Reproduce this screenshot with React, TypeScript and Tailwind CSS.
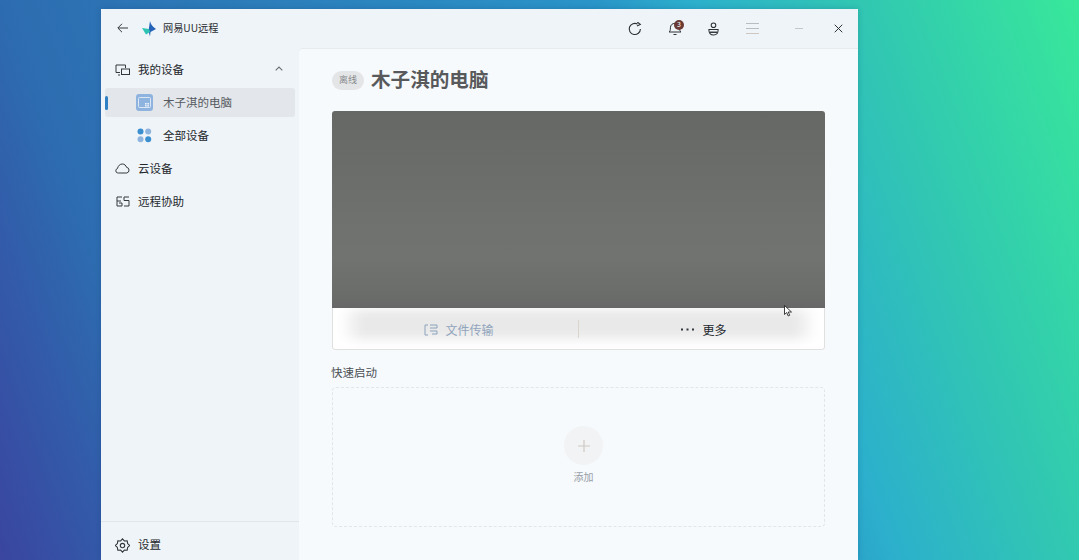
import React from "react";

const font = { fontFamily: '"Noto Sans CJK SC", "Liberation Sans", sans-serif' };

function NavRow({ icon, label, sub, active, extra }: { icon: React.ReactNode; label: string; sub?: boolean; active?: boolean; extra?: React.ReactNode }) {
  return (
    <div className={`relative flex items-center h-[29px] mx-[4px] rounded-[3px] ${active ? "bg-[#e3e6ea]" : ""} ${sub ? "pl-[31px]" : "pl-[10px]"}`}>
      {active && <span className="absolute left-0 top-[8px] h-[14px] w-[3px] rounded-full bg-[#2f7fc4]" />}
      <span className={`flex items-center justify-center shrink-0 ${sub ? "w-[17px] mr-[10px]" : "w-[15px] mr-[8px]"}`}>{icon}</span>
      <span className={`text-[11.5px] ${active ? "text-[#555a60]" : "text-[#23272c]"}`}>{label}</span>
      {extra}
    </div>
  );
}

export default function App() {
  return (
    <div style={font} className="relative h-[560px] w-[1079px] overflow-hidden bg-[linear-gradient(70deg,#3a45a0_0%,#2d6cb0_16%,#2a94c8_62%,#2cb0cc_70%,#31c7b2_83%,#38e89a_100%)]">
      {/* window */}
      <div className="absolute left-[101px] top-[9px] flex h-[551px] w-[757px] flex-col bg-[#eff4f8] shadow-[0_0_6px_rgba(0,40,90,0.2)]">
        {/* title bar */}
        <div className="flex h-[39px] shrink-0 items-center">
          <svg className="ml-[16px] mb-[2px]" width="11" height="10" viewBox="0 0 11 10" fill="none" stroke="#33383e" strokeWidth="1">
            <path d="M11 5H1M5 .8 .8 5 5 9.200" />
          </svg>
          <svg className="ml-[13px]" width="16" height="16" viewBox="0 0 16 16">
            <path d="M9 0 C9.500 3 11 5 15 8 L9.500 11 L9 15.500 L7.500 10 Z" fill="#2563b8" />
            <path d="M1 7 L8 8 L9 11 L5 13.500 Z" fill="#2fc3b3" />
          </svg>
          <span className="ml-[6px] mb-[2px] text-[10.2px] text-[#2b2f34]">网易UU远程</span>
          <div className="ml-auto flex items-center">
            <svg width="14" height="14" viewBox="0 0 14 14" fill="none" stroke="#2c3036" strokeWidth="1.1" className="mr-[26px]">
              <path d="M12.400 7A5.600 5.600 0 1 1 9.600 2.100" />
              <path d="M9.300 0 L12.300 2.400 L9 4" />
            </svg>
            <span className="relative mr-[25px] h-[14px] w-[14px]">
              <svg width="14" height="16" viewBox="0 0 14 16" fill="none" stroke="#2c3036" strokeWidth="1" className="absolute left-0 top-[-1px]">
                <path d="M1 11c1.300-1 1.400-2 1.400-4.200C2.400 4 4.400 2.300 7 2.300s4.600 1.700 4.600 4.500c0 2.200.1 3.200 1.400 4.200Z" />
                <path d="M5.500 13.500h3" />
              </svg>
              <span className="absolute left-[6px] top-[-2px] flex h-[10px] w-[10px] items-center justify-center rounded-full bg-[#6b3a35] text-[7px] leading-none text-white">3</span>
            </span>
            <svg width="13" height="14" viewBox="0 0 14 15" fill="none" stroke="#2c3036" strokeWidth="1.1" className="mr-[26px]">
              <circle cx="7" cy="3.500" r="2.500" />
              <path d="M1.500 8h11M2 8c0 3.500 1 6 5 6s5-2.500 5-6" />
              <path d="M3 11h8" strokeWidth="1.500" />
            </svg>
            <svg width="13" height="11" viewBox="0 0 13 11" stroke="#b9bdc0" strokeWidth="1" className="mr-[36px]">
              <path d="M0 .500h13M0 5.500h13" />
              <path d="M0 10.500h13" stroke="#cfc6c0" />
            </svg>
            <span className="mr-[31px] mb-[1px] h-px w-[8px] bg-[#c4c6c8]" />
            <svg width="9" height="9" viewBox="0 0 10 10" stroke="#2c3036" strokeWidth="1.100" className="mr-[15px]">
              <path d="M.8.8l8.400 8.400M9.200.8.800 9.200" />
            </svg>
          </div>
        </div>

        <div className="flex min-h-0 flex-1">
          {/* sidebar */}
          <aside className="flex w-[198px] shrink-0 flex-col pt-[7px]">
            <div className="flex flex-col gap-[4px]">
              <NavRow
                label="我的设备"
                icon={
                  <svg width="15" height="12" viewBox="0 0 15 12" fill="none" stroke="#33383e" strokeWidth="1">
                    <path d="M5 8.500H1V1h9.500v3M3 11h2" />
                    <rect x="6.500" y="5" width="8" height="5.500" />
                  </svg>
                }
                extra={
                  <svg width="8" height="5" viewBox="0 0 8 5" fill="none" stroke="#6b7076" strokeWidth="1.100" className="ml-auto mr-[12px] mb-[2px]">
                    <path d="M.7 4.300 4 1l3.300 3.300" />
                  </svg>
                }
              />
              <NavRow
                sub
                active
                label="木子淇的电脑"
                icon={
                  <span className="flex h-[17px] w-[17px] items-center justify-center rounded-[3px] bg-[#8fb3df]">
                    <svg width="13" height="12" viewBox="0 0 13 12" fill="none">
                      <rect x=".5" y=".5" width="12" height="10" rx="1" stroke="#dbe7f5" />
                      <path d="M7 6h4v3.500H7z" fill="#eaf1fa" />
                      <path d="M9 6v3.500M7 7.700h4" stroke="#8fb3df" strokeWidth=".6" />
                    </svg>
                  </span>
                }
              />
              <NavRow
                sub
                label="全部设备"
                icon={
                  <svg width="15" height="15" viewBox="0 0 15 15">
                    <circle cx="3.500" cy="3.500" r="3" fill="#3a8fd0" />
                    <circle cx="11.200" cy="3.500" r="3" fill="#8fb5df" />
                    <circle cx="3.500" cy="11.200" r="3" fill="#8fb5df" />
                    <circle cx="11.200" cy="11.200" r="3" fill="#3a8fd0" />
                  </svg>
                }
              />
              <NavRow
                label="云设备"
                icon={
                  <svg width="15" height="11" viewBox="0 0 15 11" fill="none" stroke="#33383e" strokeWidth="1">
                    <path d="M3.500 10H2.800A2.300 2.300 0 0 1 2.500 5.500C3 2.800 5 1 7.300 1c2.200 0 3.700 1.500 4.200 3.300a2.900 2.900 0 0 1 .3 5.700H3.500Z" />
                  </svg>
                }
              />
              <NavRow
                label="远程协助"
                icon={
                  <svg width="14" height="11" viewBox="0 0 14 11" fill="none" stroke="#33383e" strokeWidth="1">
                    <path d="M6 1H1v4h4M1 5v5h5V7H3" />
                    <path d="M13 1H8v3.500h5V10H8" />
                  </svg>
                }
              />
            </div>
            <div className="mt-auto flex h-[39px] items-center border-t border-[#e1e5e8] pl-[14px] pt-[8px]">
              <svg width="15" height="15" viewBox="0 0 24 24" fill="none" stroke="#33383e" strokeWidth="1.800">
                <path d="M12 1.500l3 3.300 4.500-.3.700 4.400 3.300 3.100-3.300 3.100-.7 4.400-4.500-.3-3 3.300-3-3.300-4.500.3-.7-4.400L.5 12l3.300-3.100.7-4.400 4.500.3z" />
                <circle cx="12" cy="12" r="3.500" />
              </svg>
              <span className="ml-[8px] text-[11.5px] text-[#23272c]">设置</span>
            </div>
          </aside>

          {/* main */}
          <main className="min-w-0 flex-1 rounded-tl-[4px] border-t border-[#e6eaee] bg-[#f6fafd] pl-[33px] pr-[33px] pt-[20px]">
            <div className="flex h-[22px] items-center">
              <span className="flex h-[19px] w-[32px] items-center justify-center rounded-full bg-[#e4e5e6] text-[9px] text-[#85898d]">离线</span>
              <h1 className="ml-[7px] mb-[2px] text-[19.6px] font-bold leading-none text-[#58595b]">木子淇的电脑</h1>
            </div>

            <section className="mt-[20px] flex h-[239px] flex-col overflow-hidden rounded-[3px] bg-white">
              <div className="h-[197px] shrink-0 bg-[linear-gradient(180deg,#666866_0%,#6f716f_55%,#717371_75%,#6a6c6a_95%,#666766_100%)]" />
              <div className="flex min-h-0 flex-1 items-center rounded-b-[3px] border border-t-0 border-[#e0e0df] bg-[#e9e9e9] shadow-[inset_28px_0_18px_-10px_#fff,inset_-28px_0_18px_-10px_#fff,inset_0_-14px_12px_-4px_#fff,inset_0_6px_8px_-3px_#f8f8f8]">
                <div className="mt-[2px] flex w-[245px] items-center justify-center pl-[7px] text-[12px] text-[#90a4bc]">
                  <svg width="14" height="12" viewBox="0 0 14 12" fill="none" stroke="#8ca2bd" strokeWidth="1" className="mr-[7px]">
                    <path d="M4 1H1v10h3M6 1h7v3H6M13 7H6M13 7v3H8" />
                  </svg>
                  文件传输
                </div>
                <span className="h-[18px] w-px bg-[#d9d5cd]" />
                <div className="mt-[2px] flex flex-1 items-center justify-center pl-[5px] text-[12px] text-[#23272c]">
                  <svg width="13" height="3" viewBox="0 0 13 3" fill="#33383e" className="mr-[8px]">
                    <rect width="2" height="2" x="0" y=".5" />
                    <rect width="2" height="2" x="5.500" y=".5" />
                    <rect width="2" height="2" x="11" y=".5" />
                  </svg>
                  更多
                </div>
              </div>
            </section>

            <div className="mt-[13px] -ml-[1px] text-[11.5px] leading-[18px] text-[#4b4f54]">快速启动</div>
            <div className="mt-[6px] flex h-[140px] flex-col items-center rounded-[4px] border border-dashed border-[#e2e6ea] pl-[10px] pt-[38px]">
              <span className="flex h-[39px] w-[39px] items-center justify-center rounded-full bg-[#f1f3f4]">
                <svg width="12" height="12" viewBox="0 0 12 12" stroke="#cfc8c2" strokeWidth="1.200">
                  <path d="M6 0v12M0 6h12" />
                </svg>
              </span>
              <span className="mt-[5px] text-[10px] leading-[14px] text-[#979da5]">添加</span>
            </div>
          </main>
        </div>
      </div>

      {/* mouse cursor */}
      <svg className="absolute left-[784px] top-[305px]" width="9" height="13" viewBox="0 0 9 13">
        <path d="M.5.500v9l2.200-2 1.500 3.500 1.500-.7L4.200 7H7.500Z" fill="#fff" stroke="#111" strokeWidth=".8" />
      </svg>
    </div>
  );
}
